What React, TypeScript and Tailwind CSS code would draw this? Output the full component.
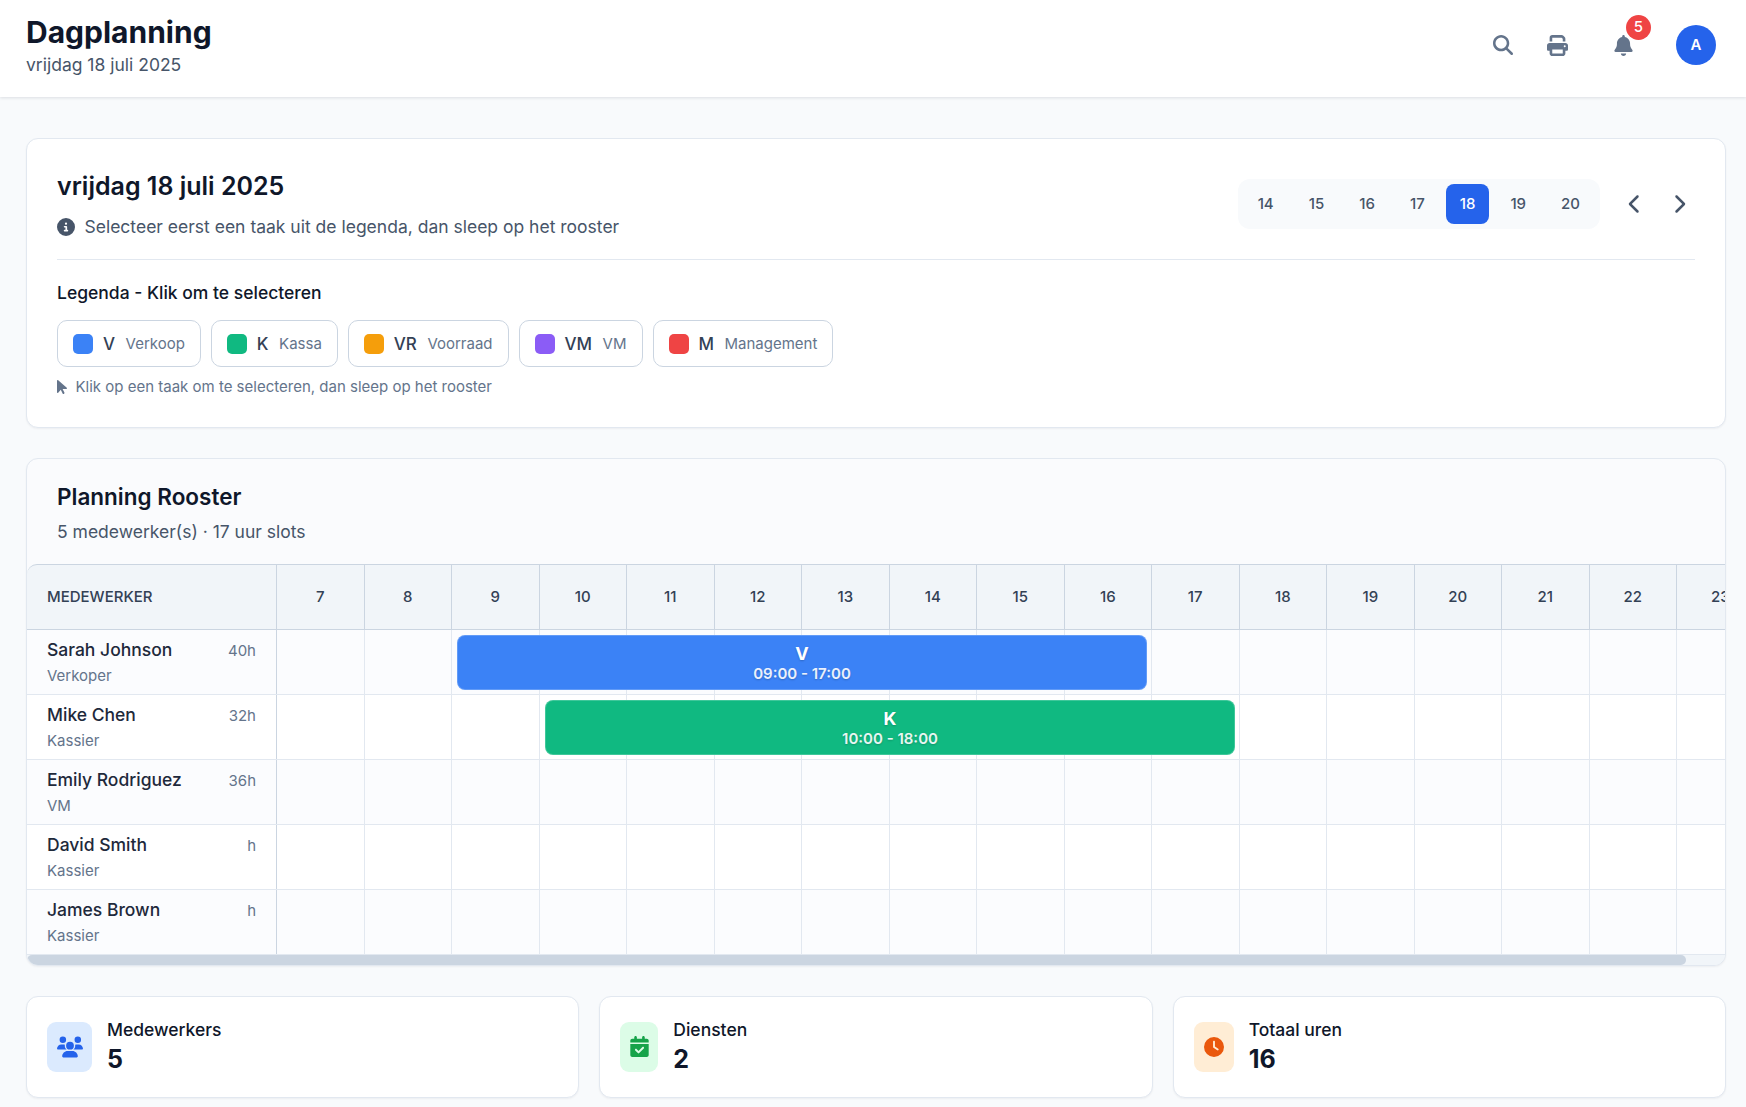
import React from "react";
import {
  FaMagnifyingGlass, FaPrint, FaBell, FaChevronLeft, FaChevronRight, FaCircleInfo,
  FaArrowPointer, FaUsers, FaCalendarCheck, FaClock,
} from "react-icons/fa6";

const hours = [7, 8, 9, 10, 11, 12, 13, 14, 15, 16, 17, 18, 19, 20, 21, 22, 23];
const people = [
  { name: "Sarah Johnson", role: "Verkoper", h: "40h", bar: { label: "V", time: "09:00 - 17:00", cls: "bg-[#3b82f6] left-[430px]" } },
  { name: "Mike Chen", role: "Kassier", h: "32h", bar: { label: "K", time: "10:00 - 18:00", cls: "bg-[#10b981] left-[518px]" } },
  { name: "Emily Rodriguez", role: "VM", h: "36h" },
  { name: "David Smith", role: "Kassier", h: "h" },
  { name: "James Brown", role: "Kassier", h: "h" },
];
const legend = [
  { c: "V", n: "Verkoop", cls: "bg-[#3b82f6]" },
  { c: "K", n: "Kassa", cls: "bg-[#10b981]" },
  { c: "VR", n: "Voorraad", cls: "bg-[#f59e0b]" },
  { c: "VM", n: "VM", cls: "bg-[#8b5cf6]" },
  { c: "M", n: "Management", cls: "bg-[#ef4444]" },
];
const days = [14, 15, 16, 17, 18, 19, 20];

function Stat({ icon, box, label, value }: { icon: React.ReactNode; box: string; label: string; value: string }) {
  return (
    <div className="flex h-[102px] items-center gap-[15px] rounded-[12px] border border-[#e2e8f0] bg-white pl-[20px] shadow-[0_1px_2px_rgba(15,23,42,0.05)]">
      <div className={`flex h-[50px] items-center justify-center rounded-[9px] ${box}`}>{icon}</div>
      <div className="pt-[1px]">
        <div className="text-[17.5px] leading-[20px] font-medium text-[#0f172a]">{label}</div>
        <div className="mt-[4px] text-[25px] leading-[30px] font-bold text-[#0f172a]">{value}</div>
      </div>
    </div>
  );
}

export default function App() {
  return (
    <div className="min-h-screen bg-[#f8fafc] font-['Inter',sans-serif] text-[#0f172a]">
      <header className="flex h-[97px] items-start justify-between bg-white pt-[14px] pr-[30px] pl-[26px] shadow-[0_1px_3px_rgba(15,23,42,0.12)]">
        <div>
          <h1 className="text-[30px] leading-[36px] font-bold text-[#0f172a]">Dagplanning</h1>
          <p className="mt-[4px] text-[17.5px] leading-[22px] text-[#475569]">vrijdag 18 juli 2025</p>
        </div>
        <div className="mt-[11px] flex items-center">
          <FaMagnifyingGlass className="mr-[34px] text-[20px] text-[#64748b]" />
          <FaPrint className="mr-[45px] text-[21px] text-[#64748b]" />
          <div className="relative mr-[42px] flex">
            <FaBell className="text-[21px] text-[#64748b]" />
            <span className="absolute top-[-20px] left-[13px] flex h-[25px] w-[25px] items-center justify-center rounded-full bg-[#ef4444] text-[15px] font-medium text-white">5</span>
          </div>
          <div className="flex h-[40px] w-[40px] items-center justify-center rounded-full bg-[#2563eb] text-[15px] font-semibold text-white">A</div>
        </div>
      </header>

      <main className="pt-[41px] pr-[20px] pl-[26px]">
        <section className="rounded-[12px] border border-[#e2e8f0] bg-white px-[30px] pt-[30px] pb-[29.5px] shadow-[0_1px_2px_rgba(15,23,42,0.05)]">
          <div className="flex items-start justify-between border-b border-[#e2e8f0] pb-[19px]">
            <div>
              <h2 className="text-[25px] leading-[34px] font-semibold text-[#0f172a]">vrijdag 18 juli 2025</h2>
              <p className="mt-[11px] flex items-center gap-[9.5px] text-[17.5px] leading-[26px] text-[#475569]">
                <FaCircleInfo className="text-[18px] text-[#475569]" />
                Selecteer eerst een taak uit de legenda, dan sleep op het rooster
              </p>
            </div>
            <div className="mt-[10px] mr-[6px] flex items-center">
              <div className="flex h-[50px] items-center gap-[8px] rounded-[12px] bg-[#f8fafc] px-[6.5px]">
                {days.map((d) => (
                  <div key={d} className={`flex h-[40px] items-center justify-center rounded-[8px] px-[13.5px] text-[15px] font-medium ${d === 18 ? "bg-[#2563eb] text-white" : "text-[#475569]"}`}>{d}</div>
                ))}
              </div>
              <FaChevronLeft className="ml-[25px] text-[20px] text-[#475569]" />
              <FaChevronRight className="ml-[24px] text-[20px] text-[#475569]" />
            </div>
          </div>
          <h3 className="mt-[22px] text-[17.5px] leading-[22px] font-medium text-[#0f172a]">Legenda - Klik om te selecteren</h3>
          <div className="mt-[16px] flex gap-[10px]">
            {legend.map((l) => (
              <div key={l.c} className="flex h-[47px] items-center rounded-[10px] border border-[#cbd5e1] bg-white px-[15px]">
                <span className={`h-[20px] w-[20px] rounded-[5px] ${l.cls}`} />
                <span className="mt-[2px] ml-[10px] text-[17px] font-medium text-[#334155]">{l.c}</span>
                <span className="mt-[2px] ml-[10.5px] text-[15px] text-[#64748b]">{l.n}</span>
              </div>
            ))}
          </div>
          <p className="mt-[10px] flex items-center gap-[5.5px] text-[15px] leading-[20px] text-[#64748b]">
            <FaArrowPointer className="ml-[-3px] text-[16px] text-[#64748b]" />
            Klik op een taak om te selecteren, dan sleep op het rooster
          </p>
        </section>

        <section className="mt-[30px] overflow-hidden rounded-[12px] border border-[#e2e8f0] bg-[#fafbfd] shadow-[0_1px_2px_rgba(15,23,42,0.05)]">
          <div className="h-[105px] px-[30px] pt-[23px]">
            <h2 className="text-[22.5px] leading-[30px] font-semibold text-[#0f172a]">Planning Rooster</h2>
            <p className="mt-[7px] text-[17.5px] leading-[26px] text-[#475569]">5 medewerker(s) · 17 uur slots</p>
          </div>
          <div className="overflow-hidden">
            <div className="flex h-[66px] w-max rounded-t-[10px] border-y border-[#cbd5e1] bg-[#f1f5f9]">
              <div className="flex w-[250px] items-center border-r border-[#cbd5e1] pt-[2px] pl-[20px] text-[15px] font-medium text-[#334155]">MEDEWERKER</div>
              {hours.map((h) => (
                <div key={h} className="flex w-[87.5px] items-center justify-center border-r border-[#cbd5e1] pt-[2px] text-[15px] font-medium text-[#334155]">{h}</div>
              ))}
            </div>
            {people.map((p, i) => (
              <div key={p.name} className={`relative flex h-[65px] w-max border-b border-[#e2e8f0] ${i % 2 ? "bg-white" : "bg-[#fbfcfe]"}`}>
                <div className="w-[250px] border-r border-[#cbd5e1] px-[20px] pt-[8px]">
                  <div className="flex items-center justify-between">
                    <span className="text-[17.5px] leading-[24px] font-medium text-[#1e293b]">{p.name}</span>
                    <span className="mt-[2px] text-[15px] text-[#64748b]">{p.h}</span>
                  </div>
                  <div className="mt-[4px] text-[15px] leading-[20px] text-[#64748b]">{p.role}</div>
                </div>
                {hours.map((h) => (
                  <div key={h} className="w-[87.5px] border-r border-[#e2e8f0]" />
                ))}
                {p.bar && (
                  <div className={`absolute top-[5px] flex h-[55px] w-[690px] flex-col items-center justify-center rounded-[8px] border border-white/20 pt-[1px] text-white [text-shadow:0_1px_2px_rgba(0,0,0,0.2)] ${p.bar.cls}`}>
                    <span className="text-[18px] leading-[21px] font-bold">{p.bar.label}</span>
                    <span className="text-[15px] leading-[19px] font-semibold text-white/90">{p.bar.time}</span>
                  </div>
                )}
              </div>
            ))}
          </div>
          <div className="h-[10px] bg-[#f1f5f9]">
            <div className="h-full w-[1659px] rounded-full bg-[#cbd5e1]" />
          </div>
        </section>

        <div className="mt-[30px] grid grid-cols-3 gap-[20px] pb-[10px]">
          <Stat icon={<FaUsers className="text-[26px] text-[#2563eb]" />} box="w-[45px] bg-[#dbeafe]" label="Medewerkers" value="5" />
          <Stat icon={<FaCalendarCheck className="text-[21px] text-[#16a34a]" />} box="w-[38px] bg-[#dcfce7]" label="Diensten" value="2" />
          <Stat icon={<FaClock className="text-[20px] text-[#ea580c]" />} box="w-[40px] bg-[#ffedd5]" label="Totaal uren" value="16" />
        </div>
      </main>
    </div>
  );
}
